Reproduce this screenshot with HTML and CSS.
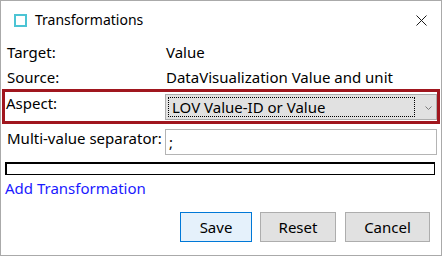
FILE: index.html
```html
<!DOCTYPE html>
<html lang="en">
<head>
    <meta charset="UTF-8">
    <title>Transformations</title>
    <link rel="stylesheet" href="styles.css">
</head>
<body>
    <div class="window">
        <div class="titlebar">
            <span class="app-icon"></span>
            <span class="title">Transformations</span>
            <svg class="close" width="11" height="11" viewBox="0 0 11 11">
                <path d="M0.5 0.5 L10.5 10.5 M10.5 0.5 L0.5 10.5" stroke="#1a1a1a" stroke-width="1" fill="none"/>
            </svg>
        </div>

        <div class="fields">
            <div class="row">
                <span class="label">Target:</span>
                <span class="value">Value</span>
            </div>
            <div class="row row-source">
                <span class="label">Source:</span>
                <span class="value">DataVisualization Value and unit</span>
            </div>
            <div class="row row-aspect">
                <span class="label">Aspect:</span>
                <div class="select">
                    <div class="select-focus">LOV Value-ID or Value</div>
                    <div class="chevron">
                        <svg width="7" height="4" viewBox="0 0 7 4">
                            <path d="M0.5 0.5 L3.5 3.5 L6.5 0.5" stroke="#7a7a7a" stroke-width="1" fill="none"/>
                        </svg>
                    </div>
                </div>
            </div>
            <div class="row row-multi">
                <span class="label">Multi-value separator:</span>
                <div class="textbox">;</div>
            </div>
        </div>

        <div class="bar"></div>
        <a class="add-link" href="#">Add Transformation</a>

        <div class="buttons">
            <button class="btn btn-save" type="button">Save</button>
            <button class="btn btn-reset" type="button">Reset</button>
            <button class="btn btn-cancel" type="button">Cancel</button>
        </div>
    </div>
</body>
</html>
```
FILE: styles.css
```css
body {
    margin: 0;
    background: #ffffff;
}

.window {
    width: 442px;
    height: 256px;
    box-sizing: border-box;
    border: 1px solid #aaaaaa;
    background: #ffffff;
    color: #000000;
    font-family: "Noto Sans", sans-serif;
    font-size: 15px;
    line-height: 20px;
}

/* Barra de titulo */
.titlebar {
    height: 37px;
    display: flex;
    align-items: center;
    padding: 0 14px 0 13px;
}

.app-icon {
    width: 13px;
    height: 13px;
    box-sizing: border-box;
    border: 2px solid #4cc4d4;
    margin-top: 1px;
}

.title {
    font-size: 14px;
    line-height: 19px;
    margin-left: 8px;
    flex: 1;
}

.close {
    display: block;
    margin-top: 1px;
}

/* Campos */
.fields {
    padding-top: 4px;
}

.row {
    display: grid;
    grid-template-columns: 158px 1fr;
    padding: 0 4px 0 6px;
    margin-bottom: 5px;
}

.row .value {
    padding-left: 1px;
}

.row-source {
    margin-bottom: 2px;
}

.row-aspect {
    margin: 0 1px 5px 1px;
    border: 3px solid #a0161e;
    padding: 2px 0 1px 1px;
    grid-template-columns: 159px 1fr;
}

.row-aspect .label {
    margin-top: -1px;
}

.select {
    height: 26px;
    box-sizing: border-box;
    border: 1px solid #adadad;
    background: #e1e1e1;
    padding: 2px 0 2px 2px;
    display: flex;
}

.select-focus {
    flex: 1;
    border: 1px dotted #000000;
    padding-left: 3px;
    line-height: 18px;
    white-space: nowrap;
}

.chevron {
    width: 21px;
    display: flex;
    align-items: center;
    justify-content: flex-end;
    padding-right: 4px;
    box-sizing: border-box;
}

.chevron svg {
    display: block;
    margin-top: 2px;
}

.row-multi .label {
    margin-top: -1px;
}

.textbox {
    height: 26px;
    box-sizing: border-box;
    border: 1px solid #b4b4b4;
    padding-left: 3px;
    line-height: 24px;
    background: #ffffff;
}

/* Barra vacia */
.bar {
    height: 13px;
    box-sizing: border-box;
    margin: 7px 6px 0 4px;
    border-style: solid;
    border-color: #000000;
    border-width: 2px 1px 1px 2px;
}

.add-link {
    display: inline-block;
    margin: 3px 0 0 4px;
    color: #1a1aff;
    text-decoration: none;
}

/* Botones */
.buttons {
    display: flex;
    justify-content: flex-end;
    gap: 8px;
    margin-top: 14px;
    padding-right: 11px;
}

.btn {
    height: 30px;
    box-sizing: border-box;
    font-family: "Noto Sans", sans-serif;
    font-size: 15px;
    color: #000000;
    background: #e1e1e1;
    border: 1px solid #adadad;
    border-radius: 0;
    padding: 0;
}

.btn-save {
    width: 72px;
    background: #e5f1fb;
    border: 1px solid #0078d7;
}

.btn-reset {
    width: 76px;
}

.btn-cancel {
    width: 85px;
    margin-left: 1px;
}
```
